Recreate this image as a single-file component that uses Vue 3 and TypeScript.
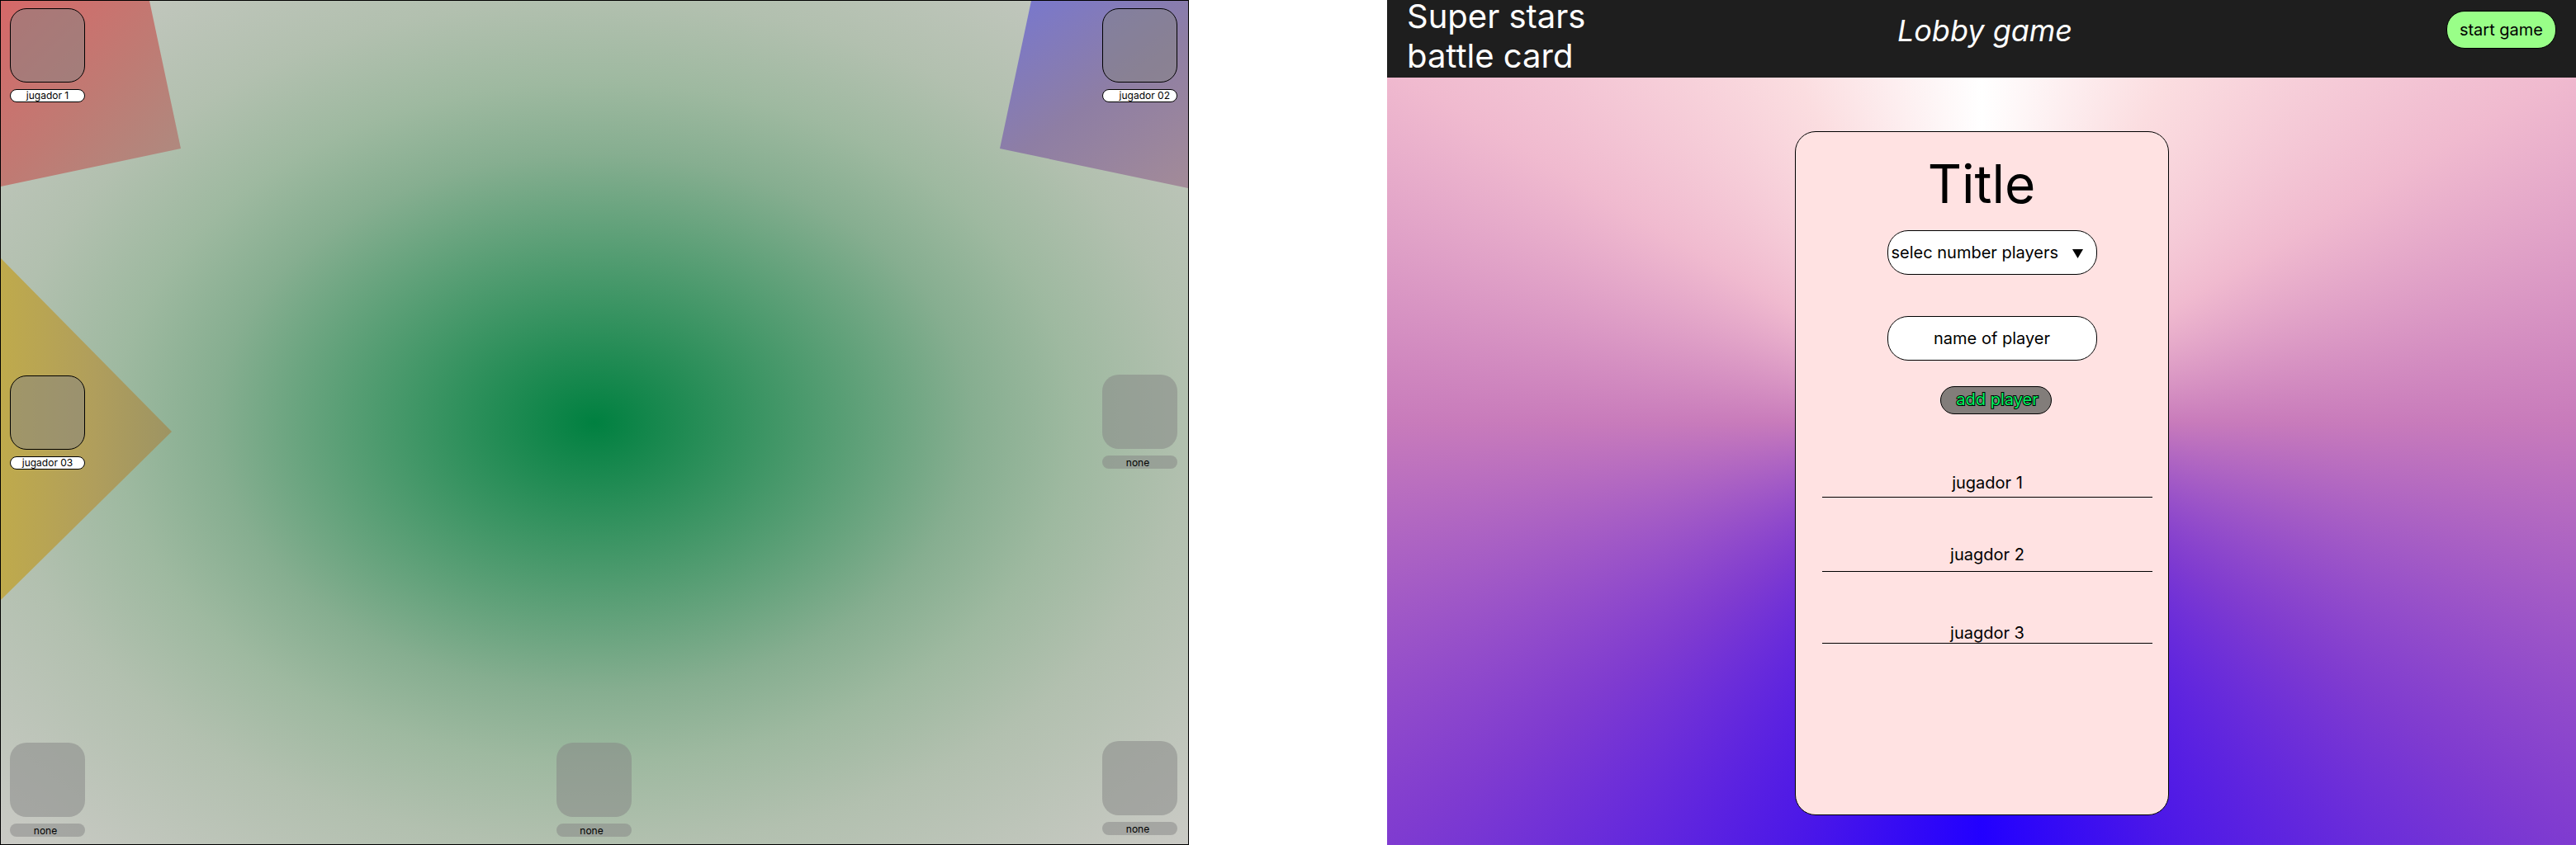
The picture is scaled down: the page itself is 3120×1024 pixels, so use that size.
<script setup lang="ts">
import { ref } from 'vue'

interface Seat {
  name: string | null
}

const leftSeats: Seat[] = [{ name: 'jugador 1' }, { name: 'jugador 03' }, { name: null }]
const middleSeats: Seat[] = [{ name: null }]
const rightSeats: Seat[] = [{ name: 'jugador 02' }, { name: null }, { name: null }]

const sides = [
  { id: 'left', seats: leftSeats },
  { id: 'middle', seats: middleSeats },
  { id: 'right', seats: rightSeats },
]

const players = ref<string[]>(['jugador 1', 'juagdor 2', 'juagdor 3'])
const playerName = ref('')
const playerCount = ref('')

function addPlayer() {
  const name = playerName.value.trim()
  if (!name) return
  players.value.push(name)
  playerName.value = ''
}
</script>

<template>
  <div class="page">
    <section class="table-view">
      <div class="zone zone-red"></div>
      <div class="zone zone-blue"></div>
      <div class="zone zone-yellow"></div>
      <div v-for="side in sides" :key="side.id" class="side" :class="side.id">
        <div v-for="(seat, i) in side.seats" :key="i" class="seat" :class="{ taken: seat.name }">
          <div class="avatar"></div>
          <div class="name">{{ seat.name ?? 'none' }}</div>
        </div>
      </div>
    </section>

    <section class="lobby">
      <header class="bar">
        <div class="brand">Super stars<br />battle card</div>
        <h1 class="heading">Lobby game</h1>
        <button class="start" type="button">start game</button>
      </header>

      <main class="card">
        <h2 class="title">Title</h2>
        <form class="form" @submit.prevent="addPlayer">
          <div class="select-box">
            <select v-model="playerCount" class="field" aria-label="selec number players">
              <option value="">selec number players</option>
              <option v-for="n in 7" :key="n" :value="String(n + 1)">{{ n + 1 }}</option>
            </select>
            <svg class="arrow" viewBox="0 0 13 11" aria-hidden="true">
              <path d="M0 0H13L6.500 11Z" />
            </svg>
          </div>
          <input
            v-model="playerName"
            class="field name-field"
            type="text"
            placeholder="name of player"
            aria-label="name of player"
          />
          <button class="add" type="submit">add player</button>
        </form>
        <ul class="players">
          <li v-for="(player, i) in players" :key="i">{{ player }}</li>
        </ul>
      </main>
    </section>
  </div>
</template>

<style>
body {
  margin: 0;
  background: #fff;
}
</style>

<style scoped>
.page {
  display: grid;
  grid-template-columns: 6fr 1fr 6fr;
  font-family: Inter, 'Liberation Sans', sans-serif;
  color: #000;
}

.page * {
  box-sizing: border-box;
}

/* Table */
.table-view {
  position: relative;
  display: flex;
  justify-content: space-between;
  aspect-ratio: 1440 / 1024;
  box-sizing: border-box;
  padding: 9px 13px 9px 11px;
  border: 1px solid #000;
  background: radial-gradient(
    ellipse farthest-corner,
    #008040 0%,
    #86ae90 45%,
    #9eb9a0 57%,
    #b2c0af 71%,
    #cacac5 100%
  );
}

.zone {
  position: absolute;
}

.zone-red {
  top: 0;
  left: 0;
  width: 218px;
  height: 226px;
  clip-path: polygon(0 0, 180px 0, 218px 179px, 0 225px);
  background: linear-gradient(135deg, #d66868 0%, #c07a73 50%, #ad8b80 95%);
}

.zone-blue {
  top: 0;
  right: 0;
  width: 228px;
  height: 228px;
  clip-path: polygon(38px 0, 228px 0, 228px 227px, 0 179px);
  background: linear-gradient(145deg, #7a78ca 8%, #8e7ea4 52%, #a38b98 100%);
}

.zone-yellow {
  top: 312px;
  left: 0;
  width: 207px;
  height: 414px;
  clip-path: polygon(0 0, 100% 210px, 0 100%);
  background: linear-gradient(90deg, #bfaa4c, #b09e5c 55%, #9d9463);
}

.side {
  position: relative;
  display: flex;
  flex-direction: column;
  justify-content: space-between;
}

.side.middle {
  justify-content: flex-end;
}

.side.right {
  padding-bottom: 2px;
}

.seat {
  display: flex;
  flex-direction: column;
  gap: 8px;
  width: 91px;
}

.avatar {
  height: 90px;
  border-radius: 20px;
  background: rgba(132, 132, 132, 0.5);
}

.name {
  height: 16px;
  border-radius: 8px;
  background: rgba(132, 132, 132, 0.5);
  font-size: 12px;
  line-height: 18px;
  padding-right: 5px;
  text-align: center;
}

.taken .avatar {
  border: 1px solid #000;
}

.taken .name {
  border: 1px solid #000;
  background: #fff;
  line-height: 14px;
  padding: 0;
}

.right .taken .name {
  padding-right: 8px;
  text-align: right;
}

/* Lobby */
.lobby {
  grid-column: 3;
  position: relative;
  display: flex;
  flex-direction: column;
  aspect-ratio: 1440 / 1024;
  overflow: hidden;
}

/* A square sweep flattened to the panel's proportions */
.lobby::before {
  content: '';
  position: absolute;
  top: 0;
  left: 0;
  width: 100%;
  aspect-ratio: 1;
  transform: scaleY(0.7111);
  transform-origin: top;
  background: conic-gradient(
    #fff 0deg,
    #fbdde0 21deg,
    #f0bacf 50deg,
    #c87bbb 90deg,
    #7f3bd0 135deg,
    #4b17e8 163deg,
    #20f 180deg,
    #4b17e8 197deg,
    #7f3bd0 225deg,
    #c87bbb 270deg,
    #f0bacf 310deg,
    #fbdde0 339deg,
    #fff 360deg
  );
}

.bar {
  position: relative;
  display: grid;
  grid-template-columns: 1fr auto 1fr;
  align-items: start;
  height: 94px;
  padding: 0 24px;
  background: #1e1e1e;
  color: #fff;
}

.brand {
  margin-top: -4px;
  font-size: 40px;
  line-height: 48px;
}

.heading {
  margin: 15px 0 0;
  padding-left: 8px;
  font-size: 36px;
  line-height: 44px;
  font-weight: 400;
  font-style: italic;
}

.start {
  justify-self: end;
  height: 46px;
  margin-top: 13px;
  padding: 0 15px;
  border: 1px solid #000;
  border-radius: 22px;
  background: #9f8;
  color: #000;
  font: 20px/24px Inter, 'Liberation Sans', sans-serif;
}

.card {
  position: relative;
  flex: 1;
  display: flex;
  flex-direction: column;
  align-items: center;
  width: 453px;
  margin: 65px auto 36px;
  padding-top: 24px;
  border: 1px solid #000;
  border-radius: 25px;
  background: #ffe2e2;
}

.title {
  margin: 0 0 17px;
  font-size: 64px;
  line-height: 78px;
  font-weight: 400;
}

.form {
  display: flex;
  flex-direction: column;
  width: 254px;
  margin-left: 25px;
}

.select-box {
  position: relative;
  margin-bottom: 50px;
}

.field {
  display: block;
  width: 100%;
  height: 54px;
  padding: 0 4px;
  border: 1px solid #000;
  border-radius: 25px;
  background: #fff;
  color: #000;
  font: 20px/24px Inter, 'Liberation Sans', sans-serif;
  appearance: none;
}

.arrow {
  position: absolute;
  top: 23px;
  right: 17px;
  width: 13px;
  height: 11px;
  pointer-events: none;
}

.name-field {
  margin-bottom: 31px;
  text-align: center;
}

.name-field::placeholder {
  color: #000;
  opacity: 1;
}

.add {
  width: 135px;
  height: 34px;
  margin-left: 64px;
  padding: 0 0 2px 4px;
  border: 1px solid #000;
  border-radius: 17px;
  background: #827d7a;
  color: #00f560;
  font: 20px/24px Inter, 'Liberation Sans', sans-serif;
  -webkit-text-stroke: 2px #000;
  paint-order: stroke fill;
}

.players {
  width: 400px;
  margin: 71px 0 0 14px;
  padding: 0;
  list-style: none;
  font-size: 20px;
  line-height: 24px;
  text-align: center;
}

.players li {
  padding: 58px 0 6px;
  border-bottom: 1px solid #000;
}

.players li:first-child {
  padding: 0 0 5px;
}

.players li:nth-child(2) {
  padding: 57px 0 8px;
}

.players li:nth-child(3) {
  padding: 62px 0 0;
}
</style>
